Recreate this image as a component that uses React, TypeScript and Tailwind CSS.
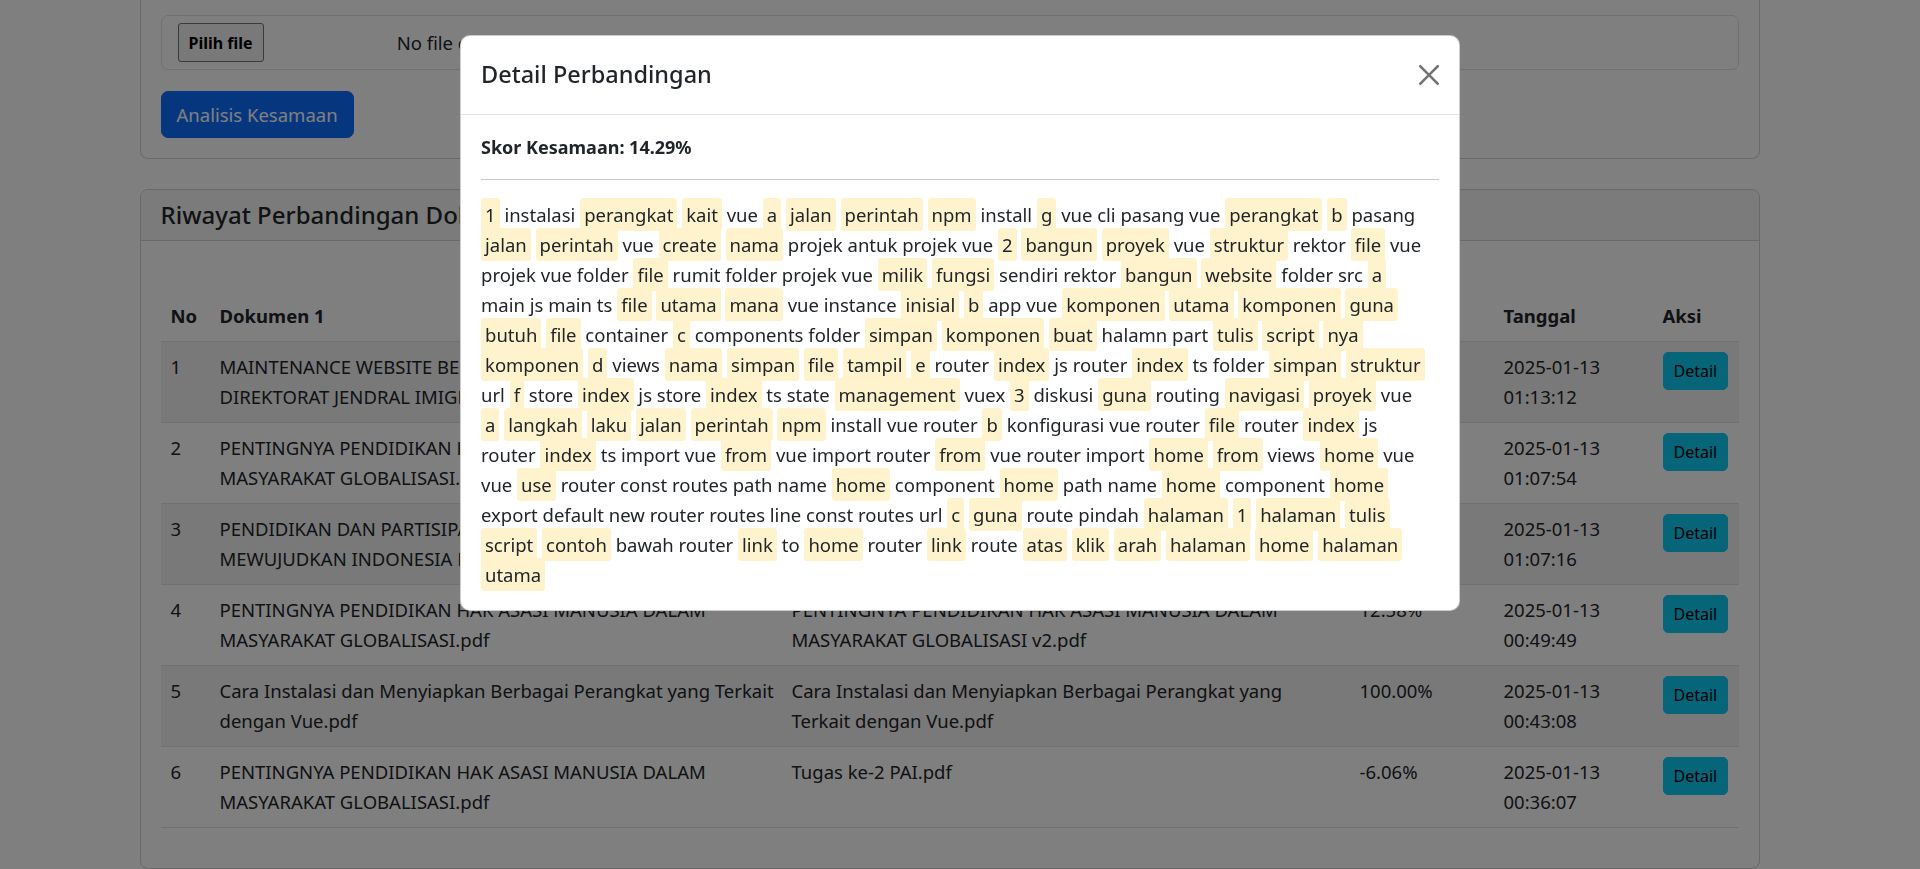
import React from "react";

const LINES: string[] = [
  "[1] instalasi [perangkat] [kait] vue [a] [jalan] [perintah] [npm] install [g] vue cli pasang vue [perangkat] [b] pasang",
  "[jalan] [perintah] vue [create] [nama] projek antuk projek vue [2] [bangun] [proyek] vue [struktur] rektor [file] vue",
  "projek vue folder [file] rumit folder projek vue [milik] [fungsi] sendiri rektor [bangun] [website] folder src [a]",
  "main js main ts [file] [utama] [mana] vue instance [inisial] [b] app vue [komponen] [utama] [komponen] [guna]",
  "[butuh] [file] container [c] components folder [simpan] [komponen] [buat] halamn part [tulis] [script] [nya]",
  "[komponen] [d] views [nama] [simpan] [file] [tampil] [e] router [index] js router [index] ts folder [simpan] [struktur]",
  "url [f] store [index] js store [index] ts state [management] vuex [3] diskusi [guna] routing [navigasi] [proyek] vue",
  "[a] [langkah] [laku] [jalan] [perintah] [npm] install vue router [b] konfigurasi vue router [file] router [index] js",
  "router [index] ts import vue [from] vue import router [from] vue router import [home] [from] views [home] vue",
  "vue [use] router const routes path name [home] component [home] path name [home] component [home]",
  "export default new router routes line const routes url [c] [guna] route pindah [halaman] [1] [halaman] [tulis]",
  "[script] [contoh] bawah router [link] to [home] router [link] route [atas] [klik] [arah] [halaman] [home] [halaman]",
  "[utama]",
];

type Row = {
  no: string;
  d1: string[];
  d2: string[];
  score: string;
  date: string;
  time: string;
};

const ROWS: Row[] = [
  {
    no: "1",
    d1: ["MAINTENANCE WEBSITE BERBASIS WORDPRESS PADA", "DIREKTORAT JENDRAL IMIGRASI.pdf"],
    d2: ["MAINTENANCE WEBSITE BERBASIS WORDPRESS", "PADA DIREKTORAT JENDRAL IMIGRASI v2.pdf"],
    score: "45.12%",
    date: "2025-01-13",
    time: "01:13:12",
  },
  {
    no: "2",
    d1: ["PENTINGNYA PENDIDIKAN HAK ASASI MANUSIA DALAM", "MASYARAKAT GLOBALISASI.pdf"],
    d2: ["PENDIDIKAN DAN PARTISIPASI POLITIK DALAM", "MEWUJUDKAN INDONESIA EMAS.pdf"],
    score: "8.33%",
    date: "2025-01-13",
    time: "01:07:54",
  },
  {
    no: "3",
    d1: ["PENDIDIKAN DAN PARTISIPASI POLITIK DALAM", "MEWUJUDKAN INDONESIA EMAS.pdf"],
    d2: ["Cara Instalasi dan Menyiapkan Berbagai Perangkat yang", "Terkait dengan Vue.pdf"],
    score: "14.29%",
    date: "2025-01-13",
    time: "01:07:16",
  },
  {
    no: "4",
    d1: ["PENTINGNYA PENDIDIKAN HAK ASASI MANUSIA DALAM", "MASYARAKAT GLOBALISASI.pdf"],
    d2: ["PENTINGNYA PENDIDIKAN HAK ASASI MANUSIA DALAM", "MASYARAKAT GLOBALISASI v2.pdf"],
    score: "12.58%",
    date: "2025-01-13",
    time: "00:49:49",
  },
  {
    no: "5",
    d1: ["Cara Instalasi dan Menyiapkan Berbagai Perangkat yang Terkait", "dengan Vue.pdf"],
    d2: ["Cara Instalasi dan Menyiapkan Berbagai Perangkat yang", "Terkait dengan Vue.pdf"],
    score: "100.00%",
    date: "2025-01-13",
    time: "00:43:08",
  },
  {
    no: "6",
    d1: ["PENTINGNYA PENDIDIKAN HAK ASASI MANUSIA DALAM", "MASYARAKAT GLOBALISASI.pdf"],
    d2: ["Tugas ke-2 PAI.pdf"],
    score: "-6.06%",
    date: "2025-01-13",
    time: "00:36:07",
  },
];

function TextLine({ line }: { line: string }) {
  const tokens = line.split(" ");
  return (
    <>
      {tokens.map((t, i) => {
        const marked = t.startsWith("[");
        const word = marked ? t.slice(1, -1) : t;
        return (
          <React.Fragment key={i}>
            {i > 0 ? " " : null}
            {marked ? (
              <span className="bg-[#fff3cd] px-[4px] py-[4px] rounded-[3px]">{word}</span>
            ) : (
              word
            )}
          </React.Fragment>
        );
      })}
    </>
  );
}

function Lines({ parts }: { parts: string[] }) {
  return (
    <>
      {parts.map((p, i) => (
        <React.Fragment key={i}>
          {i > 0 ? <br /> : null}
          {p}
        </React.Fragment>
      ))}
    </>
  );
}

export default function App() {
  return (
    <div className="h-screen overflow-hidden bg-white text-[#212529] font-['Noto_Sans',sans-serif] text-[18.5px] leading-[30px]">
      {/* page (body padding-right compensates removed scrollbar) */}
      <div className="pr-[21px]">
        <div className="mx-auto w-[1620px]">
          {/* Card 1 (scrolled, top is off-screen) */}
          <div className="border border-t-0 border-[#d2d2d2] rounded-b-[8px] bg-white px-[20px] pt-[15px] pb-[20px]">
            <div className="flex items-center border border-[#dee2e6] rounded-[7px] h-[55px] px-[16px]">
              <button className="border border-[#767676] rounded-[3px] bg-[#f3f3f3] h-[39px] px-[10px] text-[16px] font-bold leading-[24px] text-black">
                Pilih file
              </button>
              <span className="ml-[133px]">No file chosen</span>
            </div>
            <button className="mt-[21px] bg-[#0d6efd] text-white rounded-[7px] border border-[#0d6efd] h-[47px] px-[15px] leading-[30px]">
              Analisis Kesamaan
            </button>
          </div>

          {/* Card 2 */}
          <div className="mt-[30px] border border-[#d2d2d2] rounded-[8px] bg-white">
            <div className="bg-[#f7f7f7] border-b border-[#d2d2d2] rounded-t-[8px] px-[20px] py-[10px]">
              <h5 className="text-[24px] font-medium leading-[30px]">Riwayat Perbandingan Dokumen</h5>
            </div>
            <div className="px-[20px] pt-[50px] pb-[20px]">
              <table className="w-full table-fixed border-collapse mb-[20px]">
                <colgroup>
                  <col className="w-[49px]" />
                  <col className="w-[572px]" />
                  <col className="w-[568px]" />
                  <col className="w-[144px]" />
                  <col className="w-[159px]" />
                  <col className="w-[86px]" />
                </colgroup>
                <thead>
                  <tr className="border-b border-[#dee2e6]">
                    <th className="text-left font-bold p-[10px] align-bottom">No</th>
                    <th className="text-left font-bold p-[10px] align-bottom">Dokumen 1</th>
                    <th className="text-left font-bold p-[10px] align-bottom">Dokumen 2</th>
                    <th className="text-left font-bold p-[10px] align-bottom whitespace-nowrap">Skor</th>
                    <th className="text-left font-bold p-[10px] align-bottom">Tanggal</th>
                    <th className="text-left font-bold p-[10px] align-bottom">Aksi</th>
                  </tr>
                </thead>
                <tbody>
                  {ROWS.map((r, i) => (
                    <tr key={r.no} className={`border-b border-[#dee2e6] ${i % 2 === 0 ? "bg-black/5" : ""}`}>
                      <td className="p-[10px] align-top">{r.no}</td>
                      <td className="p-[10px] align-top whitespace-nowrap">
                        <Lines parts={r.d1} />
                      </td>
                      <td className="p-[10px] align-top whitespace-nowrap">
                        <Lines parts={r.d2} />
                      </td>
                      <td className="p-[10px] align-top">{r.score}</td>
                      <td className="p-[10px] align-top whitespace-nowrap">
                        {r.date}
                        <br />
                        {r.time}
                      </td>
                      <td className="p-[10px] align-top">
                        <button className="bg-[#0dcaf0] border border-[#0dcaf0] text-black rounded-[5px] px-[10px] py-[5px] text-[16px] leading-[26px]">
                          Detail
                        </button>
                      </td>
                    </tr>
                  ))}
                </tbody>
              </table>
            </div>
          </div>
        </div>
      </div>

      {/* backdrop */}
      <div className="fixed inset-0 z-40 bg-black/50" />

      {/* modal */}
      <div className="fixed inset-0 z-50 flex justify-center items-start pt-[35px]">
        <div className="w-[1000px] bg-white border border-black/20 rounded-[10px]">
          <div className="flex items-center justify-between px-[20px] py-[20px] border-b border-[#dee2e6]">
            <h5 className="text-[23.5px] font-medium leading-[37.5px]">Detail Perbandingan</h5>
            <button className="w-[20px] h-[20px] flex items-center justify-center" aria-label="Close">
              <svg viewBox="0 0 16 16" width="20" height="20">
                <path
                  fill="#000"
                  fillOpacity="0.55"
                  d="M.293.293a1 1 0 0 1 1.414 0L8 6.586 14.293.293a1 1 0 1 1 1.414 1.414L9.414 8l6.293 6.293a1 1 0 0 1-1.414 1.414L8 9.414l-6.293 6.293a1 1 0 0 1-1.414-1.414L6.586 8 .293 1.707a1 1 0 0 1 0-1.414z"
                />
              </svg>
            </button>
          </div>
          <div className="p-[20px]">
            <h6 className="font-bold text-[18px] leading-[24px]">Skor Kesamaan: 14.29%</h6>
            <hr className="my-[20px] border-0 border-t border-[#c8c9ca]" />
            <div className="whitespace-nowrap leading-[30px]">
              {LINES.map((l, i) => (
                <React.Fragment key={i}>
                  {i > 0 ? <br /> : null}
                  <TextLine line={l} />
                </React.Fragment>
              ))}
            </div>
          </div>
        </div>
      </div>
    </div>
  );
}
